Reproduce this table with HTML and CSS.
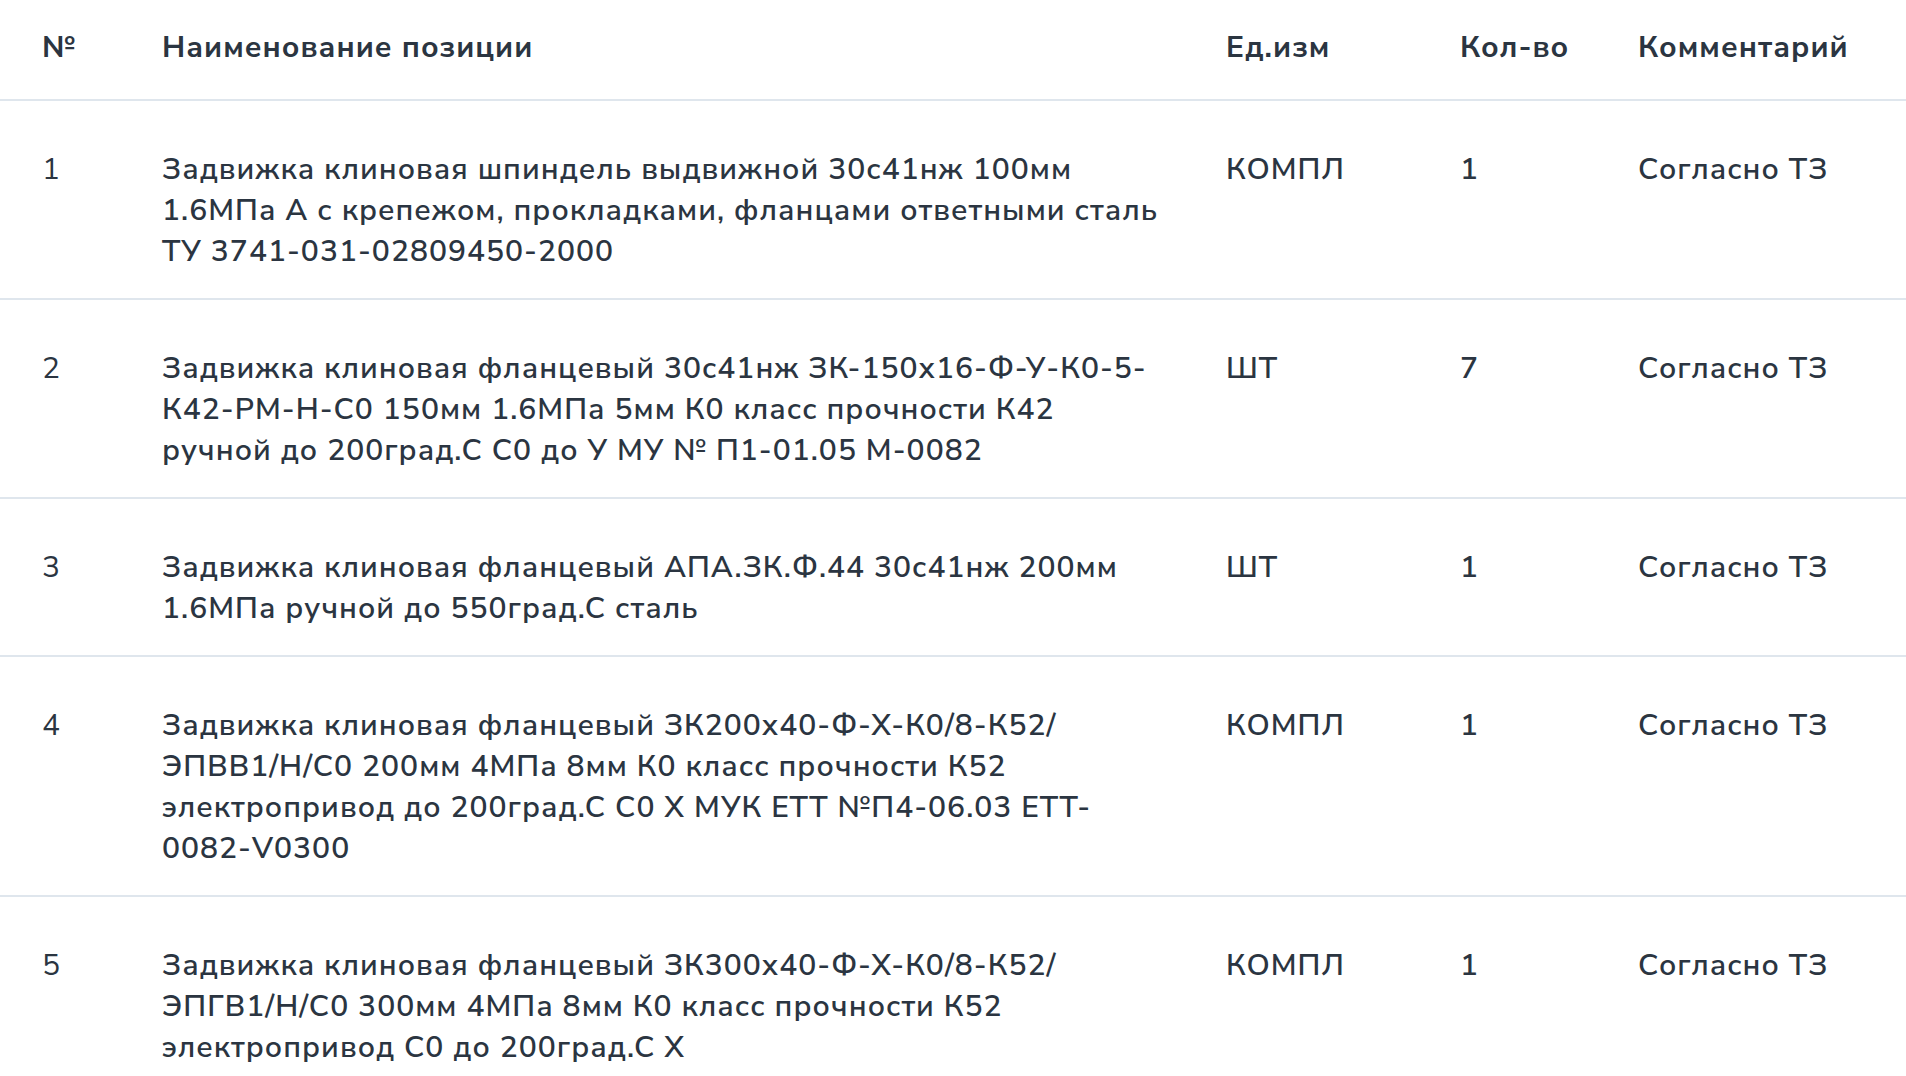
FILE: index.html
```html
<!DOCTYPE html>
<html lang="ru">
<head>
<meta charset="utf-8">
<title>Позиции</title>
<link rel="stylesheet" href="styles.css">
</head>
<body>
<table class="items">
  <colgroup>
    <col class="c-num">
    <col class="c-name">
    <col class="c-unit">
    <col class="c-qty">
    <col class="c-comment">
  </colgroup>
  <thead>
    <tr>
      <th class="num">№</th>
      <th class="name">Наименование позиции</th>
      <th>Ед.изм</th>
      <th>Кол-во</th>
      <th>Комментарий</th>
    </tr>
  </thead>
  <tbody>
    <tr>
      <td class="num">1</td>
      <td class="name">Задвижка клиновая шпиндель выдвижной 30с41нж 100мм 1.6МПа А с крепежом, прокладками, фланцами ответными сталь ТУ 3741-031-02809450-2000</td>
      <td>КОМПЛ</td>
      <td>1</td>
      <td>Согласно ТЗ</td>
    </tr>
    <tr>
      <td class="num">2</td>
      <td class="name">Задвижка клиновая фланцевый 30с41нж ЗК-150х16-Ф-У-К0-5-К42-РМ-Н-С0 150мм 1.6МПа 5мм К0 класс прочности К42 ручной до 200град.С С0 до У МУ № П1-01.05 М-0082</td>
      <td>ШТ</td>
      <td>7</td>
      <td>Согласно ТЗ</td>
    </tr>
    <tr>
      <td class="num">3</td>
      <td class="name">Задвижка клиновая фланцевый АПА.ЗК.Ф.44 30с41нж 200мм 1.6МПа ручной до 550град.С сталь</td>
      <td>ШТ</td>
      <td>1</td>
      <td>Согласно ТЗ</td>
    </tr>
    <tr>
      <td class="num">4</td>
      <td class="name">Задвижка клиновая фланцевый ЗК200х40-Ф-Х-К0/8-К52/ЭПВВ1/Н/С0 200мм 4МПа 8мм К0 класс прочности К52 электропривод до 200град.С С0 Х МУК ЕТТ №П4-06.03 ЕТТ-<wbr>0082-V0300</td>
      <td>КОМПЛ</td>
      <td>1</td>
      <td>Согласно ТЗ</td>
    </tr>
    <tr>
      <td class="num">5</td>
      <td class="name">Задвижка клиновая фланцевый ЗК300х40-Ф-Х-К0/8-К52/ЭПГВ1/Н/С0 300мм 4МПа 8мм К0 класс прочности К52 электропривод С0 до 200град.С Х</td>
      <td>КОМПЛ</td>
      <td>1</td>
      <td>Согласно ТЗ</td>
    </tr>
  </tbody>
</table>
</body>
</html>
```

FILE: styles.css
```css
html, body {
  margin: 0;
  padding: 0;
  background: #ffffff;
}

body {
  font-family: "Nunito Sans", Lato, "Open Sans", "Noto Sans", sans-serif;
  color: #2b3541;
  overflow: hidden;
}

.items {
  width: 100%;
  border-collapse: collapse;
  table-layout: fixed;
}

.c-num { width: 162px; }
.c-name { width: 1064px; }
.c-unit { width: 234px; }
.c-qty { width: 178px; }
.c-comment { width: auto; }

.items th,
.items td {
  text-align: left;
  vertical-align: top;
  font-size: 30px;
  line-height: 41px;
  letter-spacing: 1.03px;
  padding: 0 20px 0 0;
  overflow-wrap: break-word;
}

.items th {
  font-weight: 700;
  padding-top: 27px;
  padding-bottom: 31px;
}

.items td {
  font-weight: 600;
  padding-top: 48px;
  padding-bottom: 26px;
}

.items th.num,
.items td.num {
  padding-left: 42px;
}

.items td.num {
  font-weight: 400;
}

.items td.name,
.items th.name {
  padding-right: 66px;
}

.items tr {
  border-bottom: 2px solid #dfe6ed;
}
```
